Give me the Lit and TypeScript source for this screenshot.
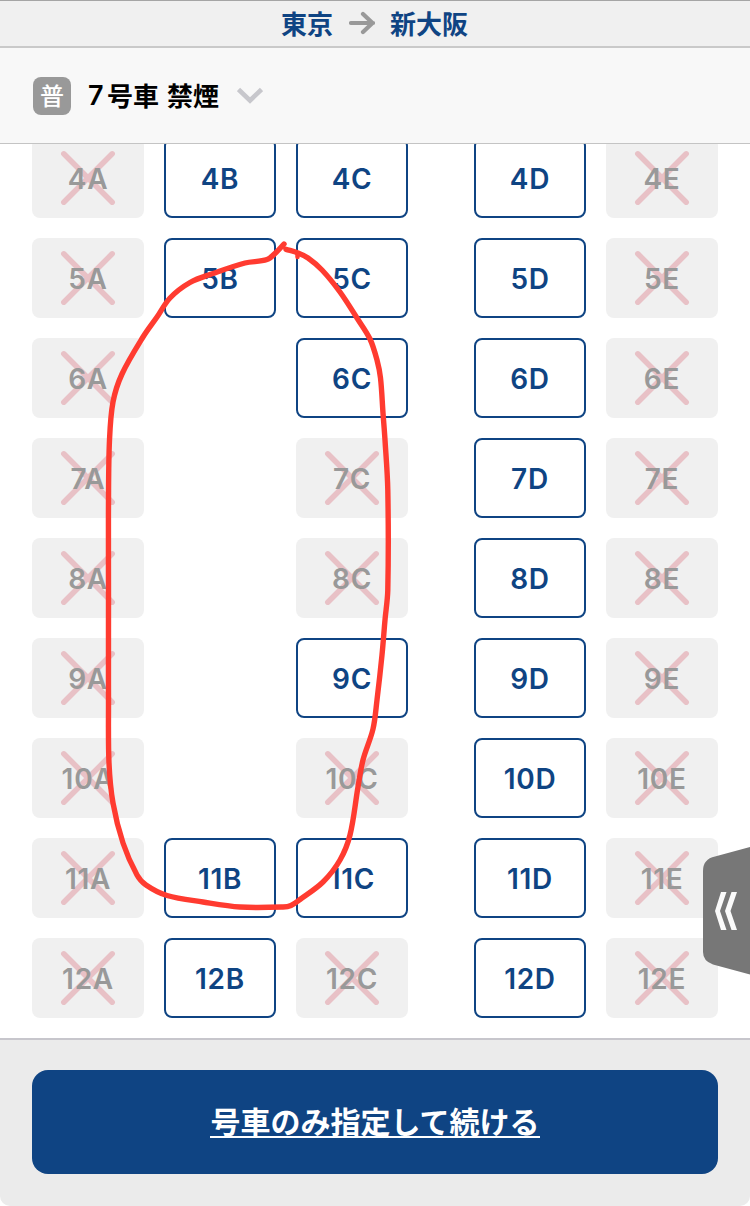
import { LitElement, html, svg, css } from "lit";
import { customElement, property } from "lit/decorators.js";

type Seat = "x" | "o" | "-";

const COLUMNS = ["A", "B", "C", "D", "E"];
const ROWS: [number, string][] = [
  [4, "xooox"],
  [5, "xooox"],
  [6, "x-oox"],
  [7, "x-xox"],
  [8, "x-xox"],
  [9, "x-oox"],
  [10, "x-xox"],
  [11, "xooox"],
  [12, "xoxox"],
];

const STROKE: [number, number][] = [
  [284, 244], [277, 251.5], [267, 259.5], [245, 263], [213, 273.5], [190, 282.5], [170, 298], [157, 317],
  [143, 337], [122, 374], [113, 402], [109.5, 440], [108.5, 500], [108.5, 600], [108.5, 700],
  [109, 763], [113, 803], [123, 843], [137, 875], [146, 885], [167, 895.5], [203, 902],
  [240, 907], [283, 907], [291, 905.5], [300, 899.5], [323, 882], [340, 860], [350, 835],
  [358, 787], [363, 760], [373, 729], [377, 700], [382, 655], [385, 620], [387.8, 590],
  [387.8, 490], [385, 440], [383, 413], [380.5, 378], [377, 360], [370, 339], [357, 318],
  [340, 292], [322, 270], [308, 258], [298, 253], [286, 249.3],
];

/* Catmull-Rom spline through the drawn points, emitted as cubic segments. */
function smooth(p: [number, number][]): string {
  let d = `M${p[0][0]} ${p[0][1]}`;
  for (let i = 0; i < p.length - 1; i++) {
    const a = p[Math.max(i - 1, 0)];
    const b = p[i];
    const c = p[i + 1];
    const e = p[Math.min(i + 2, p.length - 1)];
    const len = Math.hypot(c[0] - b[0], c[1] - b[1]);
    const tb = Math.hypot(c[0] - a[0], c[1] - a[1]) || 1;
    const tc = Math.hypot(e[0] - b[0], e[1] - b[1]) || 1;
    const k = len / 3;
    d += `C${b[0] + ((c[0] - a[0]) / tb) * k} ${b[1] + ((c[1] - a[1]) / tb) * k} ${
      c[0] - ((e[0] - b[0]) / tc) * k} ${c[1] - ((e[1] - b[1]) / tc) * k} ${c[0]} ${c[1]}`;
  }
  return d;
}

@customElement("seat-cell")
export class SeatCell extends LitElement {
  @property() label = "";
  @property() state: Seat = "o";

  static styles = css`
    :host { display: block; width: 112px; height: 80px; }
    .seat {
      box-sizing: border-box; width: 112px; height: 80px; border-radius: 8px;
      display: grid; place-items: center;
      font: 600 28px/34px Inter, "Liberation Sans", sans-serif; letter-spacing: 0.7px;
    }
    .open { border: 2px solid #0f4483; color: #0f4483; background: #fff; }
    .taken { background: #f0f0f0; color: #999; }
    .mark, .text { grid-area: 1 / 1; }
    .text { padding-top: 2px; }
    .mark { display: block; width: 112px; height: 80px; }
  `;

  render() {
    if (this.state === "-") return html``;
    if (this.state === "o") {
      return html`<div class="seat open"><span class="text">${this.label}</span></div>`;
    }
    return html`<div class="seat taken">
      <svg class="mark" viewBox="0 0 112 80">
        <path d="M31.800 15.800 80.200 64.200M80.200 15.800 31.800 64.200" fill="none" stroke="#e8c1c6" stroke-width="5.500" stroke-linecap="round" />
      </svg>
      <span class="text">${this.label}</span>
    </div>`;
  }
}

@customElement("app-root")
export class AppRoot extends LitElement {
  static styles = css`
    :host {
      display: flex; flex-direction: column; position: relative;
      width: 750px; height: 1206px; overflow: hidden; background: #fff;
      font-family: Inter, "Noto Sans CJK JP", sans-serif;
    }
    .route {
      box-sizing: border-box; height: 48px; flex: none; padding: 0 1px 2px 0;
      border-top: 1px solid #a5a5a5; border-bottom: 2px solid #c9c9c9;
      background: #f0f0f0; color: #0f4483;
      display: flex; justify-content: center; align-items: center; gap: 15.5px;
      font: 700 26px/38px "Noto Sans CJK JP", sans-serif;
    }
    .arrow { width: 26px; height: 24px; display: block; }
    .car {
      box-sizing: border-box; height: 96px; flex: none; padding-left: 33px;
      border-bottom: 1px solid #c4c4c4; background: #f8f8f8; color: #000;
      display: flex; align-items: center;
    }
    .badge {
      width: 38px; height: 38px; border-radius: 8px; background: #999; color: #fff;
      font: 500 24px/36px "Noto Sans CJK JP", sans-serif; text-align: center;
    }
    .name {
      margin-left: 17px; padding-bottom: 2px; display: flex; align-items: center;
      font: 700 26px/38px "Noto Sans CJK JP", sans-serif;
    }
    .num { font: 600 27px/38px Inter, sans-serif; width: 19px; padding-top: 3px; }
    .smoke { margin-left: 8px; }
    .chevron { width: 26px; height: 17px; margin-left: 18px; display: block; }
    .map { height: 894px; flex: none; overflow: hidden; display: flex; flex-direction: column; justify-content: flex-end; }
    .grid {
      display: grid; grid-template-columns: 112px 112px 112px 26px 112px 112px;
      gap: 20px; padding: 0 32px 20px;
    }
    .right { grid-column: 5; }
    .footer {
      box-sizing: border-box; flex: 1; border-top: 2px solid #c7c6cc;
      background: #ebebeb; padding: 30px 32px 32px; border-radius: 0 0 10px 10px;
    }
    .button {
      box-sizing: border-box; width: 100%; height: 104px; border: 0; border-radius: 16px;
      display: flex; align-items: center; justify-content: center; padding: 0;
      background: #0f4483; color: #fff;
      font: 700 30px/44px "Noto Sans CJK JP", sans-serif;
    }
    .link { border-bottom: 2px solid #fff; line-height: 28px; height: 30px; }
    .drawer { position: absolute; right: 0; top: 846px; width: 47px; height: 130px; display: block; }
    .scribble { position: absolute; left: 0; top: 0; width: 750px; height: 1206px; pointer-events: none; }
  `;

  render() {
    return html`
      <header class="route">
        <span>東京</span>
        <svg class="arrow" viewBox="0 0 26 24">
          <path d="M2 12H24M14 3 23.500 12 14 21" fill="none" stroke="#999" stroke-width="4.200" stroke-linecap="round" stroke-linejoin="round" />
        </svg>
        <span>新大阪</span>
      </header>
      <section class="car">
        <span class="badge">普</span>
        <span class="name"><span class="num">7</span><span>号車</span><span class="smoke">禁煙</span></span>
        <svg class="chevron" viewBox="0 0 26 17">
          <path d="M1.500 2.500 13 13.500 24.500 2.500" fill="none" stroke="#c7c7cc" stroke-width="4.600" />
        </svg>
      </section>
      <main class="map">
        <div class="grid">
          ${ROWS.map(([n, seats]) =>
            COLUMNS.map((c, i) => html`<seat-cell class=${c === "D" ? "right" : ""} .label=${n + c} .state=${seats[i] as Seat}></seat-cell>`)
          )}
        </div>
      </main>
      <footer class="footer">
        <button class="button"><span class="link">号車のみ指定して続ける</span></button>
      </footer>
      <svg class="drawer" viewBox="0 0 47 130">
        <path d="M47 1 12 10.5Q0 13 0 25V106Q0 115 10 118.5L47 128.500Z" fill="#777" />
        <path d="M18 46H23.5L17 65 23.5 84H18L12 65ZM28.500 46H34L27.500 65 34 84H28.500L22 65Z" fill="#fafafa" />
      </svg>
      <svg class="scribble" viewBox="0 0 750 1206">
        ${svg`<path d=${smooth(STROKE)} fill="none" stroke="#ff3b30" stroke-width="5.4" stroke-linecap="round" stroke-linejoin="round" />`}
        <path d="M297.500 254V257" stroke="#ff3b30" stroke-width="4.500" stroke-linecap="round" />
      </svg>
    `;
  }
}
